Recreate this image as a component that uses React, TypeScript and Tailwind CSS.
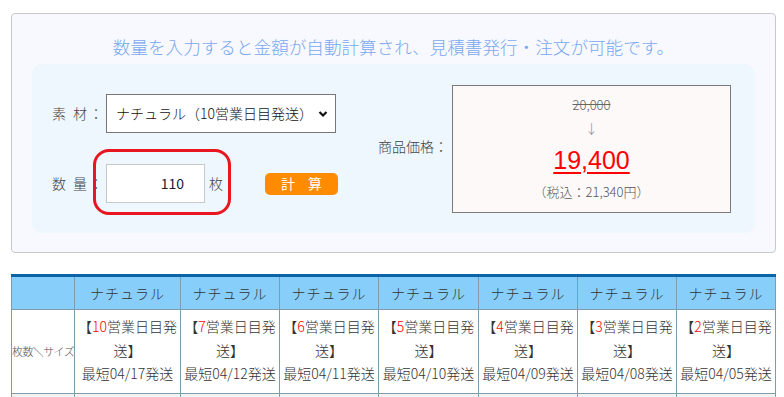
import React from "react";

const cols = [
  { n: "10", d: "04/17" },
  { n: "7", d: "04/12" },
  { n: "6", d: "04/11" },
  { n: "5", d: "04/10" },
  { n: "4", d: "04/09" },
  { n: "3", d: "04/08" },
  { n: "2", d: "04/05" },
];
const widths = [106, 99, 99, 100, 99, 99, 99];

export default function App() {
  return (
    <div className="w-[784px] h-[397px] overflow-hidden bg-white font-['Noto_Sans_CJK_JP','Noto_Sans',sans-serif] font-light text-[#333]">
      <div className="pt-[13px] pl-[11px]">
        {/* Card */}
        <div className="w-[765px] rounded-[4px] border border-[#c8c8c8] bg-[#f7f9fe] pt-[21px] pb-[19px] px-[20px]">
          <div className="text-center text-[17.6px] leading-[24px] text-[#7aa8f0]">
            数量を入力すると金額が自動計算され、見積書発行・注文が可能です。
          </div>
          <div className="mt-[5px] h-[169px] rounded-[10px] bg-[#eef6fe] flex items-center px-[20px]">
            {/* left column */}
            <div className="flex flex-col">
              <div className="flex items-center h-[39px]">
                <span className="w-[54px] text-[14px] text-[#444] tracking-[2px] whitespace-nowrap">素 材：</span>
                <div className="w-[230px] h-[39px] border border-[#777] bg-white flex items-center justify-between pl-[9px] pr-[6px]">
                  <span className="text-[14px] text-[#111] whitespace-nowrap">ナチュラル（10営業日目発送）</span>
                  <svg width="10" height="8" viewBox="0 0 10 8" className="mr-[1px]">
                    <path d="M1.5 2 L5 5.5 L8.5 2" fill="none" stroke="#111" strokeWidth="2.2" />
                  </svg>
                </div>
              </div>
              <div className="relative mt-[31px] flex items-center h-[39px]">
                <span className="w-[54px] text-[14px] text-[#444] tracking-[2px] whitespace-nowrap">数 量：</span>
                <div className="w-[99px] h-[39px] border border-[#c9c9c9] bg-white flex items-center justify-end pr-[20px]">
                  <span className="text-[14px] text-[#1a1a3a] font-normal">110</span>
                </div>
                <span className="ml-[4px] text-[14px] text-[#444]">枚</span>
                <div className="ml-[42px] w-[73px] h-[22px] rounded-[5px] bg-[#ff8c00] flex items-center justify-center text-white text-[14px] font-normal tracking-[5px] pl-[5px]">
                  計 算
                </div>
                <div className="absolute left-[41px] top-[-15px] w-[138px] h-[66px] rounded-[16px] border-[3px] border-[#e8161e]" />
              </div>
            </div>
            {/* price label */}
            <div className="ml-[40px] w-[74px] text-[14px] text-[#444] whitespace-nowrap mt-[-4px]">商品価格：</div>
            {/* price box */}
            <div className="w-[279px] h-[128px] border border-[#7b7b7b] bg-[#fdf9f9] flex flex-col items-center pt-[9px]">
              <div className="text-[13px] leading-[20px] text-[#666] line-through">20,000</div>
              <div className="text-[13px] leading-[24px] text-[#888] mt-[1px]">↓</div>
              <div className="text-[25px] leading-[40px] text-[#ff0000] underline decoration-[2px] underline-offset-[3px] font-['Liberation_Sans',sans-serif] font-normal">19,400</div>
              <div className="text-[13px] leading-[22px] text-[#555] mt-[1px]">（税込：21,340円）</div>
            </div>
          </div>
        </div>

        {/* Table */}
        <table className="mt-[21px] border-collapse table-fixed w-[764px]">
          <colgroup>
            <col style={{ width: 63 }} />
            {widths.map((w, i) => (
              <col key={i} style={{ width: w }} />
            ))}
          </colgroup>
          <thead>
            <tr className="bg-[#87cefa]">
              <th className="h-[34px] border border-[#7f9cae] border-t-[3px] border-t-[#0b64a6]" />
              {cols.map((c, i) => (
                <th
                  key={i}
                  className="h-[34px] border border-[#7f9cae] border-t-[3px] border-t-[#0b64a6] text-[14px] font-light text-[#333] tracking-[1px]"
                >
                  ナチュラル
                </th>
              ))}
            </tr>
          </thead>
          <tbody>
            <tr className="bg-white">
              <td className="h-[84px] border border-[#7f9cae] text-[11px] text-[#555] whitespace-nowrap px-0 tracking-[-0.6px]">
                枚数＼サイズ
              </td>
              {cols.map((c, i) => (
                <td
                  key={i}
                  className="h-[84px] border border-[#7f9cae] text-center text-[14px] leading-[23.5px] text-[#333] whitespace-nowrap px-0 pb-[2px]"
                >
                  【<span className="text-[#ff0000]">{c.n}</span>営業日目発
                  <br />
                  送】
                  <br />
                  最短{c.d}発送
                </td>
              ))}
            </tr>
            <tr className="bg-[#f2f2f2]">
              <td className="h-[30px] border border-[#7f9cae]" />
              {cols.map((c, i) => (
                <td key={i} className="h-[30px] border border-[#7f9cae]" />
              ))}
            </tr>
          </tbody>
        </table>
      </div>
    </div>
  );
}
